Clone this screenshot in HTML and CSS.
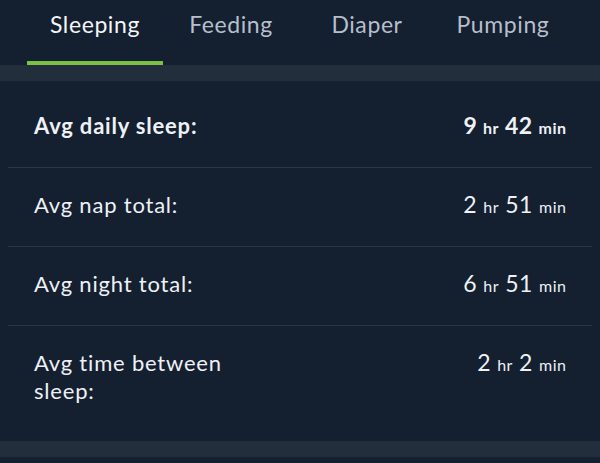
FILE: index.html
```html
<!DOCTYPE html>
<html>
<head>
<meta charset="utf-8">
<link rel="stylesheet" href="styles.css">
</head>
<body>
<nav class="tabs">
  <div class="tab active">Sleeping</div>
  <div class="tab">Feeding</div>
  <div class="tab">Diaper</div>
  <div class="tab">Pumping</div>
</nav>
<div class="band"></div>
<section class="stats">
  <div class="row bold">
    <div class="label">Avg daily sleep:</div>
    <div class="value"><span class="num">9</span> <span class="unit">hr</span> <span class="num">42</span> <span class="unit">min</span></div>
  </div>
  <div class="row">
    <div class="label">Avg nap total:</div>
    <div class="value"><span class="num">2</span> <span class="unit">hr</span> <span class="num">51</span> <span class="unit">min</span></div>
  </div>
  <div class="row">
    <div class="label">Avg night total:</div>
    <div class="value"><span class="num">6</span> <span class="unit">hr</span> <span class="num">51</span> <span class="unit">min</span></div>
  </div>
  <div class="row last">
    <div class="label">Avg time between<br>sleep:</div>
    <div class="value"><span class="num">2</span> <span class="unit">hr</span> <span class="num">2</span> <span class="unit">min</span></div>
  </div>
</section>
<div class="band"></div>
</body>
</html>
```
FILE: styles.css
```css
html, body {
  margin: 0;
  padding: 0;
  background: #141f30;
  font-family: Lato, "Open Sans", sans-serif;
  color: #eef1f5;
}
.tabs {
  display: flex;
  padding-left: 27px;
  height: 65px;
}
.tab {
  width: 136px;
  box-sizing: border-box;
  text-align: center;
  font-size: 23px;
  letter-spacing: 0.6px;
  line-height: 24px;
  padding-top: 12px;
  color: #b6bfcb;
  border-bottom: 4px solid transparent;
}
.tab.active {
  color: #f3f5f8;
  border-bottom-color: #7cc242;
}
.band {
  height: 16px;
  background: #232e3d;
}
.stats {
  margin: 0 8px;
  padding: 8px 0 9px;
}
.row {
  display: flex;
  justify-content: space-between;
  align-items: baseline;
  padding: 23px 26px 27px;
  font-size: 22px;
  letter-spacing: 0.8px;
  line-height: 28px;
  border-bottom: 1px solid #2a3546;
}
.row.last {
  border-bottom: none;
}
.row.bold {
  font-weight: bold;
}
.value {
  white-space: nowrap;
  line-height: 18px;
  letter-spacing: 0.5px;
  margin-right: -0.5px;
}
.num {
  font-size: 23px;
}
.unit {
  font-size: 16px;
}
```
